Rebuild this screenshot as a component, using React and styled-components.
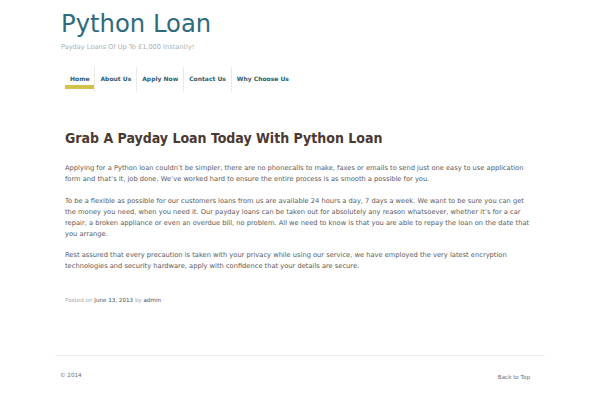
import React from 'react';
import styled, { createGlobalStyle } from 'styled-components';

const GlobalStyle = createGlobalStyle`
  html, body {
    margin: 0;
    padding: 0;
    background: #ffffff;
    font-family: "DejaVu Sans", "Liberation Sans", sans-serif;
  }
`;

// page column
const Page = styled.div`
  width: 490px;
  margin-left: 55px;
`;

const Header = styled.header`
  padding: 9px 0 0 6px;
`;

const SiteTitle = styled.h1`
  margin: 0;
  font-size: 24.3px;
  font-weight: normal;
  line-height: 30px;
  color: #2f6b7c;
`;

const Tagline = styled.div`
  margin-top: 4px;
  font-size: 6.6px;
  color: #a9b0b3;
`;

const Nav = styled.nav`
  display: flex;
  margin-top: 16px;
  padding-left: 4px;
`;

const NavItem = styled.a`
  position: relative;
  display: block;
  padding: 8px 5px 10px;
  font-size: 6px;
  font-weight: bold;
  color: #2d5d70;
  text-decoration: none;
  border-left: ${(p) => (p.$first ? 'none' : '1px solid #efe9e4')};

  &::after {
    content: '';
    display: ${(p) => (p.$active ? 'block' : 'none')};
    position: absolute;
    left: 0;
    right: 0;
    bottom: 3px;
    height: 4px;
    background: #d3c24a;
  }
`;

const Main = styled.main`
  padding: 35px 10px 0 10px;
`;

const Heading = styled.h2`
  margin: 0 0 14px;
  font-family: "DejaVu Sans Condensed", "DejaVu Sans", sans-serif;
  font-size: 14px;
  font-weight: bold;
  line-height: 22px;
  color: #4b3833;
`;

const Para = styled.p`
  margin: 0 0 10.5px;
  font-size: 6.7px;
  line-height: 11.1px;
  color: #5a5a5a;

  &:last-of-type {
    margin-top: -1px;
  }
`;

const Meta = styled.div`
  margin-top: 25px;
  font-size: 5.6px;
  color: #a8a8a8;

  span {
    color: #4d4d4d;
  }
`;

const Footer = styled.footer`
  margin-top: 52px;
  border-top: 1px solid #eeeeee;
  display: flex;
  justify-content: space-between;
  padding: 16px 15px 0 5px;
  font-size: 5.6px;
  color: #6d6d6d;
`;

const BackTop = styled.a`
  margin-top: 2px;
  color: #6d6d6d;
  text-decoration: none;
`;

export default function App() {
  return (
    <>
      <GlobalStyle />
      <Page>
        <Header>
          <SiteTitle>Python Loan</SiteTitle>
          <Tagline>Payday Loans Of Up To £1,000 Instantly!</Tagline>
          <Nav>
            <NavItem $first $active>Home</NavItem>
            <NavItem>About Us</NavItem>
            <NavItem>Apply Now</NavItem>
            <NavItem>Contact Us</NavItem>
            <NavItem>Why Choose Us</NavItem>
          </Nav>
        </Header>
        <Main>
          <Heading>Grab A Payday Loan Today With Python Loan</Heading>
          <Para>
            Applying for a Python loan couldn’t be simpler, there are no phonecalls to make, faxes or emails to send just one easy to use application form and that’s it, job done. We’ve worked hard to ensure the entire process is as smooth a possible for you.
          </Para>
          <Para>
            To be a flexible as possible for our customers loans from us are available 24 hours a day, 7 days a week. We want to be sure you can get the money you need, when you need it. Our payday loans can be taken out for absolutely any reason whatsoever, whether it’s for a car repair, a broken appliance or even an overdue bill, no problem. All we need to know is that you are able to repay the loan on the date that you arrange.
          </Para>
          <Para>
            Rest assured that every precaution is taken with your privacy while using our service, we have employed the very latest encryption technologies and security hardware, apply with confidence that your details are secure.
          </Para>
          <Meta>
            Posted on <span>June 13, 2013</span> by <span>admin</span>
          </Meta>
        </Main>
        <Footer>
          <div>© 2014</div>
          <BackTop>Back to Top</BackTop>
        </Footer>
      </Page>
    </>
  );
}
